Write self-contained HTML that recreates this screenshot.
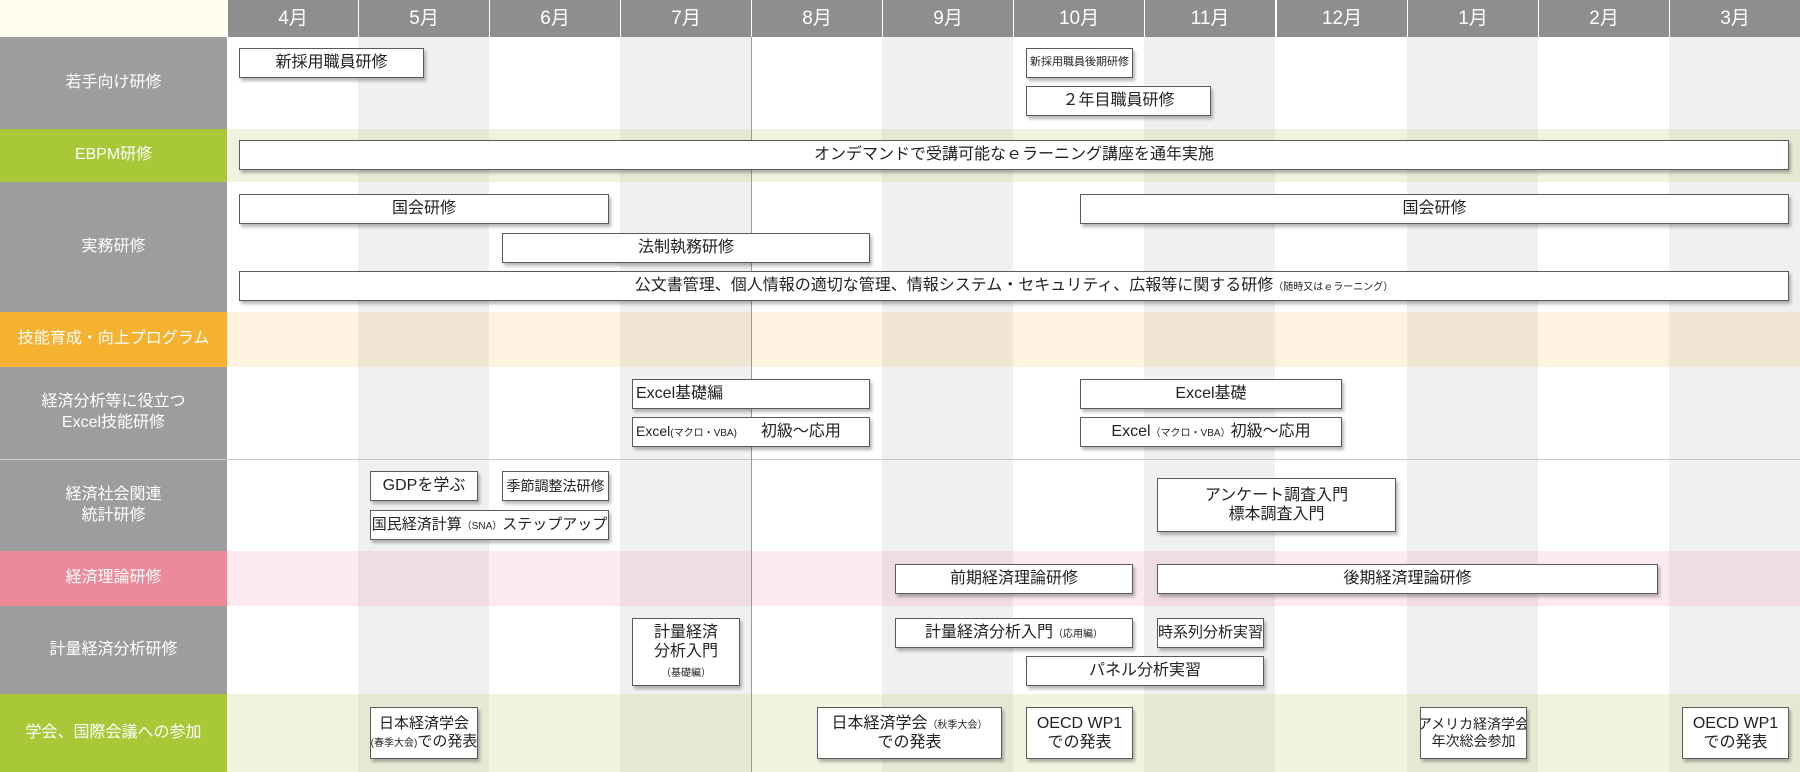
<!DOCTYPE html>
<html><head><meta charset="utf-8"><style>
*{margin:0;padding:0;box-sizing:border-box}
body{width:1800px;height:772px;position:relative;overflow:hidden;background:#fff;font-family:"Liberation Sans","Noto Sans CJK JP",sans-serif}
.a{position:absolute}
.col{position:absolute;top:37px;height:735px;width:131.1px}
.g{background:#f0f0f0}
.mh{position:absolute;top:0;height:37px;width:131.1px;background:#8e8e8e;color:#fff;font-size:19px;text-align:center;line-height:37px;border-left:1px solid #fff}
.lab{position:absolute;left:0;width:227px;color:#fff;font-size:16px;display:flex;align-items:center;justify-content:center;text-align:center;line-height:1.3;background:#9d9d9d}
.tint{position:absolute;left:227px;width:1573px}
.b{position:absolute;background:#fff;border:1px solid #5a5a5a;box-shadow:2px 3px 3px rgba(0,0,0,.28);font-size:16px;color:#222;display:flex;align-items:center;justify-content:center;text-align:center;line-height:1.2;height:30px;white-space:nowrap;overflow:hidden}
.b>div{display:block}
.s{font-size:10px}
</style></head><body>
<div class="a" style="left:0;top:0;width:227px;height:37px;background:#fffdf0"></div>
<div class="col g" style="left:358px"></div>
<div class="col g" style="left:620px"></div>
<div class="col g" style="left:882px"></div>
<div class="col g" style="left:1144px"></div>
<div class="col g" style="left:1407px"></div>
<div class="col g" style="left:1669px"></div>
<div class="tint" style="top:129px;height:53px;background:rgba(200,215,140,.28)"></div>
<div class="tint" style="top:312px;height:55px;background:rgba(248,190,90,.18)"></div>
<div class="tint" style="top:551px;height:55px;background:rgba(240,140,160,.18)"></div>
<div class="tint" style="top:694px;height:78px;background:rgba(200,215,140,.28)"></div>
<div class="a" style="left:227px;top:459px;width:1573px;height:1px;background:#c8c8c8"></div>
<div class="a" style="left:751px;top:37px;width:1px;height:735px;background:#9a9a9a"></div>
<div class="mh" style="left:227px">4月</div><div class="mh" style="left:358px">5月</div><div class="mh" style="left:489px">6月</div><div class="mh" style="left:620px">7月</div><div class="mh" style="left:751px">8月</div><div class="mh" style="left:882px">9月</div><div class="mh" style="left:1013px">10月</div><div class="mh" style="left:1144px">11月</div><div class="mh" style="left:1276px">12月</div><div class="mh" style="left:1407px">1月</div><div class="mh" style="left:1538px">2月</div><div class="mh" style="left:1669px">3月</div>
<div class="lab" style="top:37px;height:92px">若手向け研修</div>
<div class="lab" style="top:129px;height:53px;background:#a9c838">EBPM研修</div>
<div class="lab" style="top:182px;height:130px">実務研修</div>
<div class="lab" style="top:312px;height:55px;background:#f5b130">技能育成・向上プログラム</div>
<div class="lab" style="top:367px;height:92px">経済分析等に役立つ<br>Excel技能研修</div>
<div class="lab" style="top:459px;height:92px;border-top:1px solid #ccc">経済社会関連<br>統計研修</div>
<div class="lab" style="top:551px;height:55px;background:#ec8a9a">経済理論研修</div>
<div class="lab" style="top:606px;height:88px">計量経済分析研修</div>
<div class="lab" style="top:694px;height:78px;background:#a9c838">学会、国際会議への参加</div>
<div class="b" style="left:239px;top:48px;width:185px"><div>新採用職員研修</div></div>
<div class="b" style="left:1026px;top:48px;width:107px;font-size:11px"><div>新採用職員後期研修</div></div>
<div class="b" style="left:1026px;top:86px;width:185px"><div>２年目職員研修</div></div>
<div class="b" style="left:239px;top:140px;width:1550px"><div>オンデマンドで受講可能なｅラーニング講座を通年実施</div></div>
<div class="b" style="left:239px;top:194px;width:370px"><div>国会研修</div></div>
<div class="b" style="left:1080px;top:194px;width:709px"><div>国会研修</div></div>
<div class="b" style="left:502px;top:233px;width:368px"><div>法制執務研修</div></div>
<div class="b" style="left:239px;top:271px;width:1550px"><div>公文書管理、個人情報の適切な管理、情報システム・セキュリティ、広報等に関する研修<span class="s">（随時又はｅラーニング）</span></div></div>
<div class="b" style="left:632px;top:379px;width:238px;justify-content:flex-start;padding-left:3px"><div>Excel基礎編</div></div>
<div class="b" style="left:632px;top:417px;width:238px;justify-content:flex-start;padding-left:3px"><div><span style="font-size:14px">Excel</span><span class="s">(マクロ・VBA)</span><span style="margin-left:24px">初級～応用</span></div></div>
<div class="b" style="left:1080px;top:379px;width:262px"><div>Excel基礎</div></div>
<div class="b" style="left:1080px;top:417px;width:262px"><div>Excel<span class="s">（マクロ・VBA）</span>初級～応用</div></div>
<div class="b" style="left:370px;top:471px;width:108px"><div>GDPを学ぶ</div></div>
<div class="b" style="left:502px;top:471px;width:107px;font-size:14px"><div>季節調整法研修</div></div>
<div class="b" style="left:370px;top:510px;width:239px;font-size:15px"><div>国民経済計算<span class="s">（SNA）</span>ステップアップ</div></div>
<div class="b" style="left:1157px;top:478px;width:239px;height:54px"><div>アンケート調査入門<br>標本調査入門</div></div>
<div class="b" style="left:895px;top:564px;width:238px"><div>前期経済理論研修</div></div>
<div class="b" style="left:1157px;top:564px;width:501px"><div>後期経済理論研修</div></div>
<div class="b" style="left:632px;top:618px;width:108px;height:68px"><div>計量経済<br>分析入門<br><span class="s">（基礎編）</span></div></div>
<div class="b" style="left:895px;top:618px;width:238px"><div>計量経済分析入門<span class="s">（応用編）</span></div></div>
<div class="b" style="left:1157px;top:618px;width:107px;font-size:15px"><div>時系列分析実習</div></div>
<div class="b" style="left:1026px;top:656px;width:238px"><div>パネル分析実習</div></div>
<div class="b" style="left:370px;top:707px;width:108px;height:52px;font-size:15px"><div>日本経済学会<br><span class="s">(春季大会)</span>での発表</div></div>
<div class="b" style="left:817px;top:707px;width:185px;height:52px"><div>日本経済学会<span class="s">（秋季大会）</span><br>での発表</div></div>
<div class="b" style="left:1026px;top:707px;width:107px;height:52px"><div>OECD WP1<br>での発表</div></div>
<div class="b" style="left:1420px;top:707px;width:107px;height:52px;font-size:14px"><div>アメリカ経済学会<br>年次総会参加</div></div>
<div class="b" style="left:1682px;top:707px;width:107px;height:52px"><div>OECD WP1<br>での発表</div></div>
</body></html>
